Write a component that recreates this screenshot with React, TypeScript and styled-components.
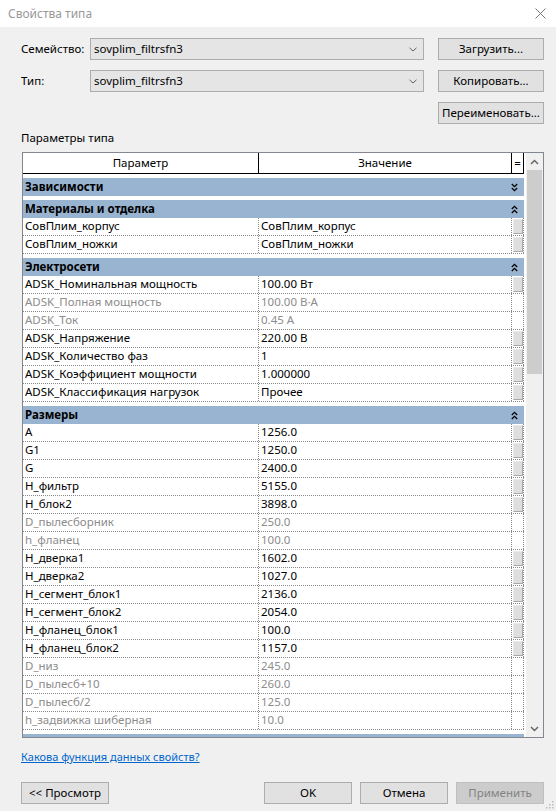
import React from "react";
import styled, { createGlobalStyle } from "styled-components";

const Global = createGlobalStyle`
  html, body { margin: 0; padding: 0; background: #f0f0f0; }
  body { font-family: "Noto Sans", "Open Sans", sans-serif; font-size: 11.5px; color: #000; }
  * { box-sizing: border-box; }
`;

const FONT = `"Noto Sans", "Open Sans", sans-serif`;

const Window = styled.div`
  width: 556px;
  height: 811px;
  background: #f0f0f0;
  display: flex;
  flex-direction: column;
  position: relative;
  overflow: hidden;
  font-family: ${FONT};
  font-size: 11.5px;
`;

const TitleBar = styled.div`
  height: 27px;
  background: #fff;
  display: flex;
  align-items: center;
  padding-left: 8px;
`;

const Title = styled.span`
  flex: 1;
  color: #999;
  font-size: 12px;
`;

const CloseBox = styled.div`
  width: 32px;
  height: 27px;
  display: flex;
  align-items: center;
  justify-content: center;
`;

const Body = styled.div`
  flex: 1;
  display: flex;
  flex-direction: column;
  padding: 11px 12px 0 21px;
`;

const TopGrid = styled.div`
  display: grid;
  grid-template-columns: 69px 348px 106px;
  grid-template-rows: 22px 22px 22px;
  row-gap: 10px;
  align-items: center;
`;

const Label = styled.span`
  line-height: 16px;
`;

const Combo = styled.div`
  height: 22px;
  width: 334px;
  border: 1px solid #adadad;
  background: #e5e5e5;
  display: flex;
  align-items: center;
  padding: 0 6px 0 3px;
`;

const ComboText = styled.span`
  flex: 1;
  line-height: 16px;
`;

const Button = styled.div<{ $disabled?: boolean; $w?: number }>`
  height: 22px;
  width: ${(p) => (p.$w ? `${p.$w}px` : "auto")};
  border: 1px solid ${(p) => (p.$disabled ? "#bfbfbf" : "#adadad")};
  background: ${(p) => (p.$disabled ? "#cccccc" : "#e1e1e1")};
  color: ${(p) => (p.$disabled ? "#838383" : "#000")};
  display: flex;
  align-items: center;
  justify-content: center;
  line-height: 16px;
  white-space: nowrap;
`;

const RowSpacer = styled.div`
  grid-column: 1 / 3;
`;

const SectionCaption = styled.div`
  margin-top: 6px;
  line-height: 16px;
  height: 16px;
`;

const GridBox = styled.div`
  margin-top: 6px;
  margin-left: 1px;
  width: 522px;
  height: 586px;
  border: 1px solid #828790;
  background: #fff;
  display: flex;
`;

const TableArea = styled.div`
  width: 501px;
  display: flex;
  flex-direction: column;
  overflow: hidden;
`;

const Gap = styled.div`
  width: 2px;
  background: #fff;
`;

const HeaderRow = styled.div`
  display: flex;
  height: 21px;
  flex: none;
  border-bottom: 1px solid #000;
  background: #fff;
`;

const HeadCell = styled.div<{ $w: number }>`
  width: ${(p) => p.$w}px;
  flex: none;
  border-right: 1px solid #000;
  display: flex;
  align-items: center;
  justify-content: center;
  line-height: 16px;
`;

const SectionRow = styled.div`
  height: 22px;
  flex: none;
  padding-top: 4px;
  background: #fff;
`;

const SectionBar = styled.div`
  height: 18px;
  background: #99b4d1;
  display: flex;
  align-items: center;
  padding: 0 6px 0 2px;
  font-weight: bold;
  line-height: 16px;
`;

const SectionTitle = styled.span`
  flex: 1;
`;

const DataRow = styled.div`
  height: 18px;
  flex: none;
  display: flex;
  border-bottom: 1px dotted #8a8a8a;
  background: #fff;
`;

const Cell = styled.div<{ $w: number; $disabled?: boolean }>`
  width: ${(p) => p.$w}px;
  flex: none;
  border-right: 1px dotted #8a8a8a;
  padding-left: 2px;
  line-height: 16px;
  white-space: nowrap;
  overflow: hidden;
  color: ${(p) => (p.$disabled ? "#8c8c8c" : "#000")};
`;

const EqCell = styled.div`
  width: 12px;
  flex: none;
  border-right: 1px dotted #8a8a8a;
  padding: 1px 0 1px 1px;
  display: flex;
`;

const EqButton = styled.div`
  flex: 1;
  background: #dedede;
  border: 1px solid #a8a8a8;
  border-top-color: #e8e8e8;
  border-left-color: #e8e8e8;
`;

const Scrollbar = styled.div`
  width: 17px;
  flex: none;
  background: #f0f0f0;
  display: flex;
  flex-direction: column;
`;

const ScrollArrow = styled.div`
  height: 17px;
  flex: none;
  display: flex;
  align-items: center;
  justify-content: center;
`;

const ScrollTrack = styled.div`
  flex: 1;
  padding: 0 1px;
`;

const Thumb = styled.div`
  height: 204px;
  background: #cdcdcd;
`;

const Link = styled.a`
  margin-top: 11px;
  line-height: 16px;
  font-size: 11px;
  color: #0066cc;
  text-decoration: underline;
  align-self: flex-start;
`;

const BottomBar = styled.div`
  margin-top: 17px;
  display: flex;
  align-items: center;
`;

const BottomRight = styled.div`
  margin-left: auto;
  display: flex;
  gap: 8px;
`;

const Grip = styled.svg`
  position: absolute;
  right: 2px;
  bottom: 2px;
`;

type Row = [string, string, boolean];
type Section = { title: string; collapsed?: boolean; rows: Row[] };

const sections: Section[] = [
  { title: "Зависимости", collapsed: true, rows: [] },
  {
    title: "Материалы и отделка",
    rows: [
      ["СовПлим_корпус", "СовПлим_корпус", true],
      ["СовПлим_ножки", "СовПлим_ножки", true],
    ],
  },
  {
    title: "Электросети",
    rows: [
      ["ADSK_Номинальная мощность", "100.00 Вт", true],
      ["ADSK_Полная мощность", "100.00 В·А", false],
      ["ADSK_Ток", "0.45 A", false],
      ["ADSK_Напряжение", "220.00 В", true],
      ["ADSK_Количество фаз", "1", true],
      ["ADSK_Коэффициент мощности", "1.000000", true],
      ["ADSK_Классификация нагрузок", "Прочее", true],
    ],
  },
  {
    title: "Размеры",
    rows: [
      ["A", "1256.0", true],
      ["G1", "1250.0", true],
      ["G", "2400.0", true],
      ["H_фильтр", "5155.0", true],
      ["H_блок2", "3898.0", true],
      ["D_пылесборник", "250.0", false],
      ["h_фланец", "100.0", false],
      ["H_дверка1", "1602.0", true],
      ["H_дверка2", "1027.0", true],
      ["H_сегмент_блок1", "2136.0", true],
      ["H_сегмент_блок2", "2054.0", true],
      ["H_фланец_блок1", "100.0", true],
      ["H_фланец_блок2", "1157.0", true],
      ["D_низ", "245.0", false],
      ["D_пылесб+10", "260.0", false],
      ["D_пылесб/2", "125.0", false],
      ["h_задвижка шиберная", "10.0", false],
    ],
  },
  { title: "", rows: [] },
];

const DoubleChevron = ({ up }: { up: boolean }) => (
  <svg width="7" height="9" viewBox="0 0 7 9">
    {up ? (
      <path d="M0.8 4 L3.5 1.3 L6.2 4 M0.8 8 L3.5 5.3 L6.2 8" stroke="#000" strokeWidth="1.3" fill="none" />
    ) : (
      <path d="M0.8 1 L3.5 3.7 L6.2 1 M0.8 5 L3.5 7.7 L6.2 5" stroke="#000" strokeWidth="1.3" fill="none" />
    )}
  </svg>
);

const ComboChevron = () => (
  <svg width="8" height="5" viewBox="0 0 8 5">
    <path d="M0.5 0.8 L4 4 L7.5 0.8" stroke="#606060" strokeWidth="1" fill="none" />
  </svg>
);

const SmallArrow = ({ up }: { up: boolean }) => (
  <svg width="9" height="6" viewBox="0 0 9 6">
    {up ? (
      <path d="M1 5 L4.5 1.5 L8 5" stroke="#606060" strokeWidth="1.4" fill="none" />
    ) : (
      <path d="M1 1 L4.5 4.5 L8 1" stroke="#606060" strokeWidth="1.4" fill="none" />
    )}
  </svg>
);

export default function App() {
  return (
    <>
      <Global />
      <Window>
        <TitleBar>
          <Title>Свойства типа</Title>
          <CloseBox>
            <svg width="11" height="11" viewBox="0 0 11 11">
              <path d="M0.5 0.5 L10.5 10.5 M10.5 0.5 L0.5 10.5" stroke="#777" strokeWidth="1" fill="none" />
            </svg>
          </CloseBox>
        </TitleBar>
        <Body>
          <TopGrid>
            <Label>Семейство:</Label>
            <Combo>
              <ComboText>sovplim_filtrsfn3</ComboText>
              <ComboChevron />
            </Combo>
            <Button>Загрузить...</Button>
            <Label>Тип:</Label>
            <Combo>
              <ComboText>sovplim_filtrsfn3</ComboText>
              <ComboChevron />
            </Combo>
            <Button>Копировать...</Button>
            <RowSpacer />
            <Button>Переименовать...</Button>
          </TopGrid>
          <SectionCaption>Параметры типа</SectionCaption>
          <GridBox>
            <TableArea>
              <HeaderRow>
                <HeadCell $w={236}>Параметр</HeadCell>
                <HeadCell $w={253}>Значение</HeadCell>
                <HeadCell $w={12}>=</HeadCell>
              </HeaderRow>
              {sections.map((s, i) => (
                <React.Fragment key={i}>
                  <SectionRow>
                    <SectionBar>
                      <SectionTitle>{s.title}</SectionTitle>
                      {s.title && <DoubleChevron up={!s.collapsed} />}
                    </SectionBar>
                  </SectionRow>
                  {s.rows.map(([name, value, editable]) => (
                    <DataRow key={name}>
                      <Cell $w={236} $disabled={!editable}>{name}</Cell>
                      <Cell $w={253} $disabled={!editable}>{value}</Cell>
                      <EqCell>{editable && <EqButton />}</EqCell>
                    </DataRow>
                  ))}
                </React.Fragment>
              ))}
            </TableArea>
            <Gap />
            <Scrollbar>
              <ScrollArrow>
                <SmallArrow up />
              </ScrollArrow>
              <ScrollTrack>
                <Thumb />
              </ScrollTrack>
              <ScrollArrow>
                <SmallArrow up={false} />
              </ScrollArrow>
            </Scrollbar>
          </GridBox>
          <Link>Какова функция данных свойств?</Link>
          <BottomBar>
            <Button $w={88}>&lt;&lt; Просмотр</Button>
            <BottomRight>
              <Button $w={88}>OK</Button>
              <Button $w={88}>Отмена</Button>
              <Button $w={88} $disabled>
                Применить
              </Button>
            </BottomRight>
          </BottomBar>
        </Body>
        <Grip width="8" height="8" viewBox="0 0 8 8">
          <rect x="6" y="0" width="1.5" height="1.5" fill="#bbb" />
          <rect x="3" y="3" width="1.5" height="1.5" fill="#bbb" />
          <rect x="6" y="3" width="1.5" height="1.5" fill="#bbb" />
          <rect x="0" y="6" width="1.5" height="1.5" fill="#bbb" />
          <rect x="3" y="6" width="1.5" height="1.5" fill="#bbb" />
          <rect x="6" y="6" width="1.5" height="1.5" fill="#bbb" />
        </Grip>
      </Window>
    </>
  );
}
